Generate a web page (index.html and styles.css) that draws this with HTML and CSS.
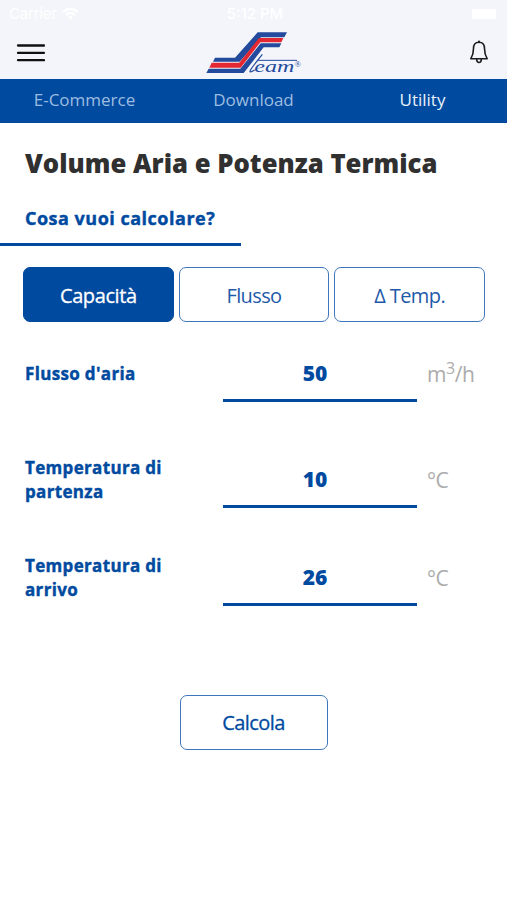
FILE: index.html
```html
<!DOCTYPE html>
<html lang="it">
<head>
    <meta charset="UTF-8">
    <meta name="viewport" content="width=device-width, initial-scale=1.0">
    <title>Volume Aria e Potenza Termica</title>
    <link rel="stylesheet" href="styles.css">
</head>
<body>
    <div class="status-bar">
        <div class="carrier">
            <span>Carrier</span>
            <svg width="17" height="13" viewBox="0 0 17 13" fill="none" stroke="#ffffff" stroke-width="2.4">
                <path d="M1 5 Q8.500 -1.500 16 5 M4 8 Q8.500 4 13 8"/>
                <path d="M6 9.500 L8.500 12.500 L11 9.500 Q8.500 8 6 9.500Z" fill="#ffffff" stroke="none"/>
            </svg>
        </div>
        <span class="clock">5:12 PM</span>
        <div class="battery"></div>
    </div>

    <header class="header">
        <svg class="menu-icon" width="29" height="20" viewBox="0 0 29 20" stroke="#111111" stroke-width="2.3" stroke-linecap="round">
            <path d="M2 2.500H28M2 9.900H28M2 17.200H28"/>
        </svg>
        <svg class="logo" width="98" height="44" viewBox="0 0 294 132">
            <g fill="#234a9c">
                <path d="M158 4H246L238 19H168L104 92H24L30 80H90Z"/>
                <path d="M229 37L223 49H176L116 126H4L11 113H106L167 37Z"/>
            </g>
            <path fill="#e32832" d="M235 21L229 34H166L107 110H13L20 95H103L162 21Z"/>
            <path d="M156 88H276" stroke="#234a9c" stroke-width="3"/>
            <path d="M172 70Q148 100 137 116Q130 129 149 117" fill="none" stroke="#234a9c" stroke-width="3.500"/>
            <text class="logo-text" x="148" y="124" textLength="120" lengthAdjust="spacingAndGlyphs">eam</text>
            <text class="logo-mark" x="269" y="109">®</text>
        </svg>
        <svg class="bell-icon" width="20" height="24" viewBox="0 0 20 24" fill="none" stroke="#1c1c1c" stroke-width="1.600" stroke-linejoin="round" stroke-linecap="round">
            <path d="M10 2.300C6 2.300 4.500 5 4.500 8.500C4.500 14.500 3.500 16 1.800 18.700H18.200C16.500 16 15.500 14.500 15.500 8.500C15.500 5 14 2.300 10 2.300Z"/>
            <path d="M10 1.500V2.300" stroke-width="2"/>
            <path d="M7.700 19.500C7.900 23.500 12.100 23.500 12.300 19.500"/>
        </svg>
    </header>

    <nav class="tabs">
        <a class="tab">E-Commerce</a>
        <a class="tab">Download</a>
        <a class="tab active">Utility</a>
    </nav>

    <main class="content">
        <h1>Volume Aria e Potenza Termica</h1>
        <h2>Cosa vuoi calcolare?</h2>

        <div class="options">
            <button class="btn selected">Capacità</button>
            <button class="btn">Flusso</button>
            <button class="btn">Δ Temp.</button>
        </div>

        <div class="field">
            <label>Flusso d'aria</label>
            <div class="value">50</div>
            <div class="unit">m<sup>3</sup>/h</div>
        </div>
        <div class="field second">
            <label>Temperatura di partenza</label>
            <div class="value">10</div>
            <div class="unit">°C</div>
        </div>
        <div class="field third">
            <label>Temperatura di arrivo</label>
            <div class="value">26</div>
            <div class="unit">°C</div>
        </div>

        <button class="btn submit">Calcola</button>
    </main>
</body>
</html>
```

FILE: styles.css
```css
* {
    box-sizing: border-box;
}

body {
    margin: 0;
    height: 900px;
    overflow: hidden;
    font-family: "Open Sans", "Noto Sans", sans-serif;
    background-color: #ffffff;
    color: #004a9f;
}

.status-bar {
    display: grid;
    grid-template-columns: 1fr auto 1fr;
    align-items: center;
    height: 27px;
    padding: 0 11px 0 9px;
    background-color: #f3f5fa;
    color: #ffffff;
    font-family: Inter, sans-serif;
    font-size: 15px;
}

.carrier {
    display: flex;
    align-items: center;
    gap: 5px;
    letter-spacing: -0.2px;
}

.clock {
    padding-left: 5px;
    font-weight: 500;
}

.battery {
    justify-self: end;
    width: 24px;
    height: 10px;
    background-color: #ffffff;
    border-radius: 1px;
}

.header {
    display: grid;
    grid-template-columns: 1fr auto 1fr;
    height: 52px;
    padding: 0 18px 0 16px;
    background-color: #f3f5fa;
}

.menu-icon {
    margin-top: 16px;
}

.logo {
    margin: 4px 0 0 3px;
}

.logo-text {
    font-family: "Liberation Serif", serif;
    font-style: italic;
    font-size: 52px;
    fill: #234a9c;
}

.logo-mark {
    font-family: "Liberation Serif", serif;
    font-size: 24px;
    fill: #234a9c;
}

.bell-icon {
    justify-self: end;
    margin-top: 13px;
}

.tabs {
    display: grid;
    grid-template-columns: repeat(3, 1fr);
    height: 44px;
    background-color: #004a9f;
}

.tab {
    text-align: center;
    font-size: 17px;
    line-height: 42px;
    color: #9dbde0;
}

.tab.active {
    color: #e9f2fc;
}

.content {
    display: flex;
    flex-direction: column;
}

h1 {
    margin: 22px 0 0 25px;
    font-size: 25.7px;
    line-height: 37px;
    font-weight: 800;
    color: #303030;
    white-space: nowrap;
}

h2 {
    width: 241px;
    height: 46px;
    margin: 18px 0 0;
    padding-left: 25px;
    border-bottom: 3px solid #004a9f;
    font-size: 18px;
    line-height: 36px;
    font-weight: 700;
    letter-spacing: 0.5px;
    white-space: nowrap;
    -webkit-text-stroke: 0.4px;
}

.options {
    display: grid;
    grid-template-columns: repeat(3, 1fr);
    gap: 5px;
    margin: 21px 22px 0 23px;
}

.btn {
    height: 55px;
    padding: 1px 0 0;
    border: 1.5px solid #3f76bb;
    border-radius: 7px;
    background-color: #ffffff;
    color: #1e5aa9;
    font-family: inherit;
    font-size: 20px;
    letter-spacing: -0.6px;
}

.btn.selected {
    background-color: #004a9f;
    border-color: #004a9f;
    color: #ffffff;
    letter-spacing: -0.4px;
    -webkit-text-stroke: 0.3px;
}

.field {
    display: grid;
    grid-template-columns: 198px 194px 1fr;
    align-items: center;
    height: 56px;
    margin: 24px 0 0 25px;
}

.field.second {
    margin-top: 50px;
}

.field.third {
    margin-top: 42px;
}

label {
    width: 165px;
    font-size: 17px;
    line-height: 24px;
    font-weight: 700;
    letter-spacing: 0.33px;
    -webkit-text-stroke: 0.4px;
}

.value {
    height: 56px;
    padding-right: 10px;
    border-bottom: 3px solid #004a9f;
    text-align: center;
    font-size: 21px;
    line-height: 55px;
    font-weight: 800;
}

.unit {
    padding-left: 10px;
    font-size: 21px;
    letter-spacing: -0.4px;
    color: #ababab;
}

sup {
    font-size: 16px;
    line-height: 0;
}

.btn.submit {
    width: 148px;
    margin: 89px auto 0;
    padding-top: 0;
    color: #004a9f;
    -webkit-text-stroke: 0.3px;
}
```
